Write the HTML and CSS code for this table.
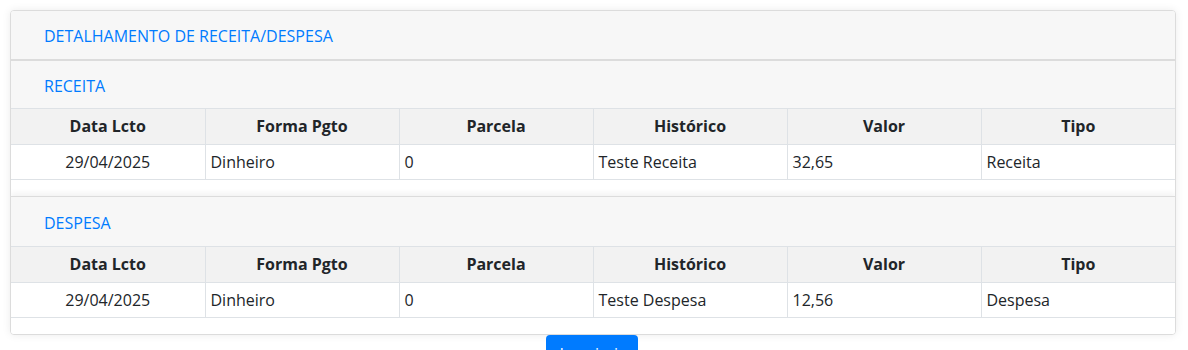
FILE: index.html
```html
<!DOCTYPE html>
<html lang="pt-BR">
<head>
<meta charset="utf-8">
<title>Detalhamento de Receita/Despesa</title>
<link rel="stylesheet" href="styles.css">
</head>
<body>
<div class="page">
  <div class="card">
    <div class="card-header">DETALHAMENTO DE RECEITA/DESPESA</div>
    <div class="sub-card">
      <div class="sub-header">RECEITA</div>
      <table class="grid">
        <thead>
          <tr><th>Data Lcto</th><th>Forma Pgto</th><th>Parcela</th><th>Histórico</th><th>Valor</th><th>Tipo</th></tr>
        </thead>
        <tbody>
          <tr><td class="center">29/04/2025</td><td>Dinheiro</td><td>0</td><td>Teste Receita</td><td>32,65</td><td>Receita</td></tr>
        </tbody>
      </table>
    </div>
    <div class="sub-card">
      <div class="sub-header">DESPESA</div>
      <table class="grid">
        <thead>
          <tr><th>Data Lcto</th><th>Forma Pgto</th><th>Parcela</th><th>Histórico</th><th>Valor</th><th>Tipo</th></tr>
        </thead>
        <tbody>
          <tr><td class="center">29/04/2025</td><td>Dinheiro</td><td>0</td><td>Teste Despesa</td><td>12,56</td><td>Despesa</td></tr>
        </tbody>
      </table>
    </div>
  </div>
  <div class="actions">
    <button class="btn">Imprimir</button>
  </div>
</div>
</body>
</html>
```

FILE: styles.css
```css
html, body {
  margin: 0;
  padding: 0;
  background: #ffffff;
}
body {
  font-family: "Open Sans", "Liberation Sans", sans-serif;
  font-size: 16px;
  color: #212529;
}
.page {
  padding: 10px 12px 0 10px;
}
.card {
  border: 1px solid #dcdcdc;
  border-radius: 4px;
  background: #ffffff;
  box-shadow: 0 0 8px rgba(0, 0, 0, 0.08);
  overflow: hidden;
}
.card-header {
  height: 48px;
  line-height: 50px;
  padding-left: 33px;
  background: #f7f7f7;
  border-bottom: 1px solid #dcdcdc;
  color: #007bff;
}
.sub-card {
  border-top: 1px solid #dcdcdc;
  background: #ffffff;
  padding-bottom: 16px;
}
.sub-card + .sub-card {
  box-shadow: 0 -3px 6px rgba(0, 0, 0, 0.05);
}
.sub-header {
  height: 47px;
  line-height: 50px;
  padding-left: 33px;
  background: #f7f7f7;
  color: #007bff;
}
.sub-card + .sub-card .sub-header {
  height: 49px;
  line-height: 52px;
}
.grid {
  width: 100%;
  border-collapse: collapse;
  table-layout: fixed;
}
.grid th, .grid td {
  border: 1px solid #dee2e6;
  text-align: left;
}
.grid tr > :first-child { border-left: none; }
.grid tr > :last-child { border-right: none; }
.grid th {
  background: #f2f2f2;
  font-weight: 700;
  text-align: center;
  line-height: 23px;
  padding: 6px 5px;
}
.grid td {
  line-height: 22px;
  padding: 6px 5px;
}
.grid td.center {
  text-align: center;
}
.actions {
  display: flex;
  justify-content: center;
  padding-right: 2px;
}
.btn {
  width: 92px;
  height: 38px;
  border: none;
  border-radius: 4px;
  background: #007bff;
  color: #ffffff;
  font-family: "Open Sans", "Liberation Sans", sans-serif;
  font-size: 16px;
}
```
